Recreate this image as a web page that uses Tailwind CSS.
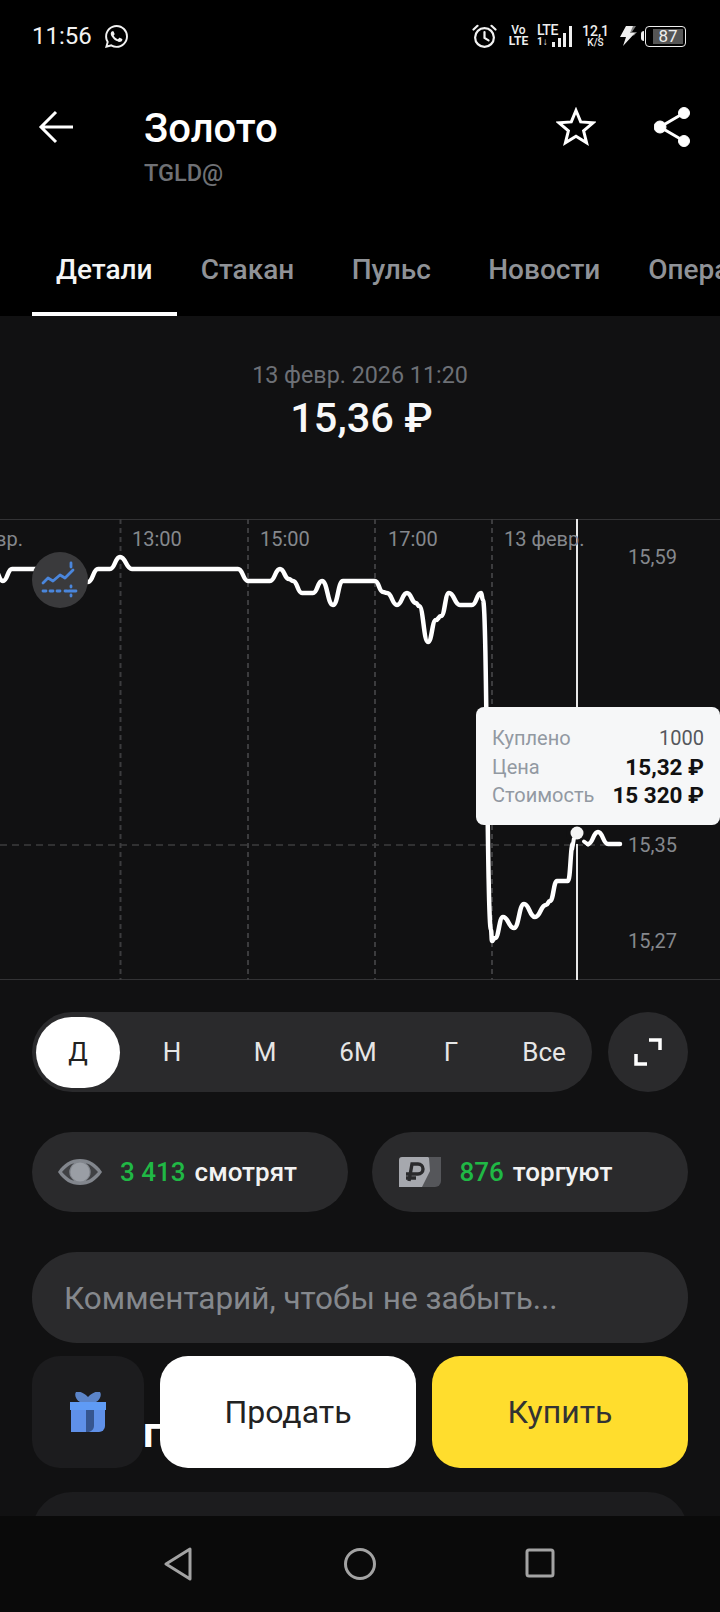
<!DOCTYPE html>
<html lang="ru">
<head>
  <meta charset="UTF-8">
  <title>Золото</title>
  <script src="https://cdn.jsdelivr.net/npm/@tailwindcss/browser@4"></script>
  <meta name="viewport" content="width=device-width, initial-scale=1.0">
</head>
<body class="bg-black">
<div class="relative w-[720px] h-[1612px] overflow-hidden bg-[#111112] text-white font-['Roboto',sans-serif]">

  <!-- Header -->
  <div class="bg-black h-[316px] relative">
    <!-- Status bar -->
    <div class="h-[72px] flex items-center justify-between pl-8 pr-[34px]">
      <div class="flex items-center gap-[13px]">
        <span class="text-[24px] leading-none text-[#f2f2f2]">11:56</span>
        <svg class="w-[23px] h-[23px]" viewBox="0 0 24 24" fill="#f2f2f2"><path d="M17.472 14.382c-.297-.149-1.758-.867-2.03-.967-.273-.099-.471-.148-.67.15-.197.297-.767.966-.94 1.164-.173.199-.347.223-.644.075-.297-.15-1.255-.463-2.39-1.475-.883-.788-1.48-1.761-1.653-2.059-.173-.297-.018-.458.13-.606.134-.133.298-.347.446-.52.149-.174.198-.298.298-.497.099-.198.05-.371-.025-.52-.075-.149-.669-1.612-.916-2.207-.242-.579-.487-.5-.669-.51-.173-.008-.371-.01-.57-.01-.198 0-.52.074-.792.372-.272.297-1.04 1.016-1.04 2.479 0 1.462 1.065 2.875 1.213 3.074.149.198 2.096 3.2 5.077 4.487.709.306 1.262.489 1.694.625.712.227 1.36.195 1.871.118.571-.085 1.758-.719 2.006-1.413.248-.694.248-1.289.173-1.413-.074-.124-.272-.198-.57-.347m-5.421 7.403h-.004a9.87 9.87 0 01-5.031-1.378l-.361-.214-3.741.982.998-3.648-.235-.374a9.86 9.86 0 01-1.51-5.26c.001-5.45 4.436-9.884 9.888-9.884 2.64 0 5.122 1.03 6.988 2.898a9.825 9.825 0 012.893 6.994c-.003 5.45-4.437 9.884-9.885 9.884m8.413-18.297A11.815 11.815 0 0012.05 0C5.495 0 .16 5.335.157 11.892c0 2.096.547 4.142 1.588 5.945L.057 24l6.305-1.654a11.882 11.882 0 005.683 1.448h.005c6.554 0 11.89-5.335 11.893-11.893a11.821 11.821 0 00-3.48-8.413z"/></svg>
      </div>
      <div class="flex items-center text-[#eeeeee]">
        <svg class="w-[25px] h-[25px] mr-[10px]" viewBox="0 0 25 25" fill="none" stroke="#f2f2f2" stroke-width="2.2" stroke-linecap="round"><circle cx="12.5" cy="13.5" r="9.4"/><path d="M12.5 8v6l4 2.4M1.5 5.5 5.5 1.8M23.5 5.5l-4-3.7"/></svg>
        <div class="w-[23px] mr-[7px] flex flex-col items-center font-medium">
          <span class="text-[12px] leading-[11px]">Vo</span>
          <span class="text-[12px] leading-[11px] font-bold">LTE</span>
        </div>
        <div class="w-[22px] mr-[-7px] self-start flex flex-col font-medium">
          <span class="text-[14px] leading-[13px] font-medium tracking-[-0.5px]">LTE</span>
          <span class="text-[10px] leading-[10px] font-bold">1↓</span>
        </div>
        <div class="w-[22px] h-[22px] mr-[7px] flex items-end gap-[2.5px]">
          <span class="w-[3px] h-[5px] bg-[#eeeeee]"></span>
          <span class="w-[3px] h-[9px] bg-[#eeeeee]"></span>
          <span class="w-[3px] h-[14px] bg-[#eeeeee]"></span>
          <span class="w-[3.5px] h-[21px] bg-[#eeeeee]"></span>
        </div>
        <div class="w-[29px] mr-[9px] flex flex-col items-center font-medium">
          <span class="text-[14px] leading-[13px]">12,1</span>
          <span class="text-[10px] leading-[10px]">K/S</span>
        </div>
        <svg class="w-[19px] h-[20px] mr-[3px]" viewBox="0 0 19 20"><path d="M8 0h9l-4 6h5l-3 3.5L12 9z" fill="#7d7d7d"/><path d="M7 0h7l-3 7h5L4 20l3-9H1z" fill="#eeeeee"/></svg>
        <span class="w-[3px] h-[10px] bg-[#eeeeee] rounded-l-sm mr-[1px]"></span>
        <div class="w-[41px] h-[21px] border-[1.5px] border-[#eeeeee] rounded-[4px] pl-[7px] pr-[2px] py-[2px]">
          <div class="h-full bg-[#555555] flex items-center justify-center text-[17px] leading-none">87</div>
        </div>
      </div>
    </div>

    <!-- Title row -->
    <div class="flex pl-[38px] pr-[30px] pt-[34px]">
      <svg class="w-[36px] h-[36px] mt-[3px] mr-[70px]" viewBox="0 0 36 36" fill="none" stroke="#fff" stroke-width="3"><path d="M35 18H5M18 3 3 18l15 15"/></svg>
      <div class="flex-1">
        <div class="text-[40px] leading-[46px] font-medium">Золото</div>
        <div class="text-[23.500px] leading-[28px] mt-[7px] font-medium text-[#6f7175]">TGLD@</div>
      </div>
      <svg class="w-[40px] h-[40px] mt-[1px] mr-[58px]" viewBox="0 0 40 40" fill="none" stroke="#fff" stroke-width="3" stroke-linejoin="miter"><path d="M20 3.5l4.7 11.4 12.3.9-9.4 8 3 12-10.6-6.5-10.6 6.5 3-12-9.4-8 12.3-.9z"/></svg>
      <svg class="w-[36px] h-[40px] mt-[1px]" viewBox="0 0 36 40" fill="#fff" stroke="#fff"><path d="M30 6 6 20l24 14" fill="none" stroke-width="3"/><circle cx="30" cy="6" r="5.5"/><circle cx="6" cy="20" r="6"/><circle cx="30" cy="34" r="5.5"/></svg>
    </div>

    <!-- Tabs -->
    <div class="absolute left-8 bottom-0 h-[84px] flex whitespace-nowrap text-[28px] font-medium text-[#8f9297]">
      <div class="px-6 pt-[17px] text-[#f5f5f5] border-b-[4px] border-white">Детали</div>
      <div class="px-6 pt-[17px]">Стакан</div>
      <div class="w-[146px] text-center pt-[17px]">Пульс</div>
      <div class="px-6 pt-[17px]">Новости</div>
      <div class="px-6 pt-[17px]">Операции</div>
    </div>
  </div>

  <!-- Price -->
  <div class="h-[203px] pt-[44px] text-center">
    <div class="text-[23.300px] leading-[30px] text-[#6d7076]">13 февр. 2026 11:20</div>
    <div class="text-[41.500px] leading-[48px] mt-[4px] pl-[3px] font-medium text-[#f8f8f8]">15,36 ₽</div>
  </div>

  <!-- Chart -->
  <div class="relative h-[461px] border-y border-[#333335]">
    <svg class="absolute left-0 top-[-1px]" width="720" height="461" viewBox="0 519 720 461" fill="none">
      <g stroke="#3c3c3e" stroke-width="2" stroke-dasharray="5 4">
        <path d="M120.500 519V980M248 519V980M375 519V980M492 519V980"/>
        <path d="M0 845H622" stroke-width="1.500" stroke-dasharray="7 5"/>
      </g>
      <path d="M577 519V980" stroke="#e8e8e8" stroke-width="2"/>
      <path id="price-line" stroke="#fff" stroke-width="4.500" stroke-linecap="round" stroke-linejoin="round"/>
      <circle cx="577" cy="833" r="11" fill="#111112"/>
      <circle cx="577" cy="833" r="6.500" fill="#f4f4f4"/>
      <path d="M572 850 574 838" stroke="#fff" stroke-width="4"/>
      <path d="M584 841.500 588 844.500" stroke="#fff" stroke-width="4" stroke-linecap="round"/>
    </svg>

    <span class="absolute left-[-5px] top-[6px] text-[20px] leading-[26px] text-[#85888d]">вр.</span>
    <span class="absolute left-[132px] top-[6px] text-[20px] leading-[26px] text-[#85888d]">13:00</span>
    <span class="absolute left-[260px] top-[6px] text-[20px] leading-[26px] text-[#85888d]">15:00</span>
    <span class="absolute left-[388px] top-[6px] text-[20px] leading-[26px] text-[#85888d]">17:00</span>
    <span class="absolute left-[504px] top-[6px] text-[20px] leading-[26px] text-[#85888d]">13 февр.</span>
    <span class="absolute left-[628px] top-[24px] text-[20px] leading-[26px] text-[#85888d]">15,59</span>
    <span class="absolute left-[628px] top-[312px] text-[20px] leading-[26px] text-[#85888d]">15,35</span>
    <span class="absolute left-[628px] top-[408px] text-[20px] leading-[26px] text-[#85888d]">15,27</span>

    <!-- Indicators button -->
    <div class="absolute left-8 top-[32px] w-[56px] h-[56px] rounded-full bg-[#3a3a3c] flex items-center justify-center">
      <svg class="w-[40px] h-[40px]" viewBox="0 0 40 40" fill="none" stroke="#4a86dc" stroke-width="2.800" stroke-linecap="round" stroke-linejoin="round"><path d="M3 23l5-5 5 3 7-6 5 3 8-8"/><path d="M31 3v4" /><path d="M3 31h3M10 31h3M17 31h3M25 31h2M33 31h3M31 26v1M31 35v1M29 31h4"/></svg>
    </div>

    <!-- Tooltip -->
    <div class="absolute left-[476px] top-[187px] w-[244px] h-[118px] rounded-[8px] bg-[#f6f7f8] px-4 pt-[17px] text-[20px] leading-[28.500px]">
      <div class="flex justify-between text-[#9299a2]"><span>Куплено</span><span class="text-[#55585d]">1000</span></div>
      <div class="flex justify-between text-[#9299a2]"><span>Цена</span><span class="font-bold text-[22.500px] text-[#111]">15,32 ₽</span></div>
      <div class="flex justify-between text-[#9299a2]"><span>Стоимость</span><span class="font-bold text-[22.500px] text-[#111]">15 320 ₽</span></div>
    </div>
  </div>

  <!-- Period selector -->
  <div class="flex gap-4 px-8 mt-[32px]">
    <div class="w-[560px] h-[80px] rounded-full bg-[#2a2a2c] flex items-center pl-1 text-[26px] text-[#e6e6e6]">
      <div class="w-[84px] h-[71px] rounded-full bg-white text-[#222] flex items-center justify-center mr-[10px]">Д</div>
      <div class="w-[84px] text-center mr-[9px]">Н</div>
      <div class="w-[84px] text-center mr-[9px]">М</div>
      <div class="w-[84px] text-center mr-[9px]">6М</div>
      <div class="w-[84px] text-center mr-[9px]">Г</div>
      <div class="w-[84px] text-center">Все</div>
    </div>
    <div class="w-[80px] h-[80px] rounded-full bg-[#2a2a2c] flex items-center justify-center">
      <svg class="w-[30px] h-[30px]" viewBox="0 0 30 30" fill="none" stroke="#fff" stroke-width="3.500"><path d="M3 17v10h11M16 3h11v10"/></svg>
    </div>
  </div>

  <!-- Watchers -->
  <div class="flex gap-6 px-8 mt-[40px]">
    <div class="flex-1 h-[80px] rounded-full bg-[#2a2a2c] flex items-center pl-[26px] text-[26px] font-medium">
      <svg class="w-[44px] h-[26px] mr-[18px]" viewBox="0 0 44 26"><path d="M0 13C6 4 13 0 22 0s16 4 22 13c-6 9-13 13-22 13S6 22 0 13z" fill="#82868d"/><path d="M4 13C9 7 14 4.500 16 4.500a10 10 0 0 0 0 17C14 21.500 9 19 4 13zM40 13c-5-6-10-8.500-12-8.500a10 10 0 0 1 0 17c2 0 7-2.500 12-8.500z" fill="#2a2a2c" opacity=".75"/><circle cx="22" cy="13" r="9.500" fill="#9a9ea5"/></svg>
      <span class="text-[#20b845] mr-[9px]">3 413</span><span class="text-[#f2f2f2]">смотрят</span>
    </div>
    <div class="flex-1 h-[80px] rounded-full bg-[#2a2a2c] flex items-center pl-[27px] text-[26px] font-medium">
      <svg class="w-[42px] h-[30px] mr-[19px]" viewBox="0 0 42 30"><path d="M12 0h30v24a6 6 0 0 1-6 6H12z" fill="#55565a"/><path d="M3 0h26l1 1 1 0 0 0-1 0L31 14 23 30H0V3a3 3 0 0 1 3-3z" fill="#a6a8ae"/><path d="M10 24 13 7h6a4.500 4.500 0 0 1 0 10H7M7 21h10" fill="none" stroke="#2a2a2c" stroke-width="3.400"/></svg>
      <span class="text-[#20b845] mr-[9px]">876</span><span class="text-[#f2f2f2]">торгуют</span>
    </div>
  </div>

  <!-- Comment -->
  <div class="mx-8 mt-[40px] h-[91px] rounded-[45px] bg-[#2a2a2c] flex items-center pl-8 pt-[2px] text-[31.500px] text-[#85888d]">Комментарий, чтобы не забыть...</div>

  <!-- Content scrolled under the buttons -->
  <div class="pl-[143px] mt-[65px] text-[42px] leading-[50px] font-bold">го</div>
  <div class="mx-8 mt-[34px] h-[120px] rounded-[40px] bg-[#1c1c1e]"></div>

  <!-- Bottom action buttons -->
  <div class="absolute left-8 top-[1356px] flex gap-4">
    <div class="w-[112px] h-[112px] rounded-[28px] bg-[#1c1c1e] flex items-center justify-center">
      <svg class="w-[40px] h-[40px]" viewBox="0 0 40 40"><path d="M8 0c3-1 7 0 12 5 5-5 9-6 12-5 2 3 0 8-4 10H12C8 8 6 3 8 0z" fill="#5b84c8"/><path d="M2 10h36v8H2z" fill="#5f9bf5"/><path d="M3 18h34v16a6 6 0 0 1-6 6H3z" fill="#5f90e8"/><path d="M18 18h8v16c0 3-2 5-5 6h-3z" fill="#36558f"/></svg>
    </div>
    <div class="w-[256px] h-[112px] rounded-[28px] bg-white text-[#222] flex items-center justify-center text-[32px]">Продать</div>
    <div class="w-[256px] h-[112px] rounded-[28px] bg-[#ffdd2d] text-[#333] flex items-center justify-center text-[32px]">Купить</div>
  </div>

  <!-- Nav bar -->
  <div class="absolute left-0 bottom-0 w-full h-[96px] bg-[#0a0a0a] flex items-center">
    <svg class="absolute left-[163px] top-[31px] w-[30px] h-[34px]" viewBox="0 0 30 34" fill="none" stroke="#a3a3a3" stroke-width="3" stroke-linejoin="round"><path d="M3 17 27 2v30z"/></svg>
    <svg class="absolute left-[343px] top-[31px] w-[34px] h-[34px]" viewBox="0 0 34 34" fill="none" stroke="#a3a3a3" stroke-width="3"><circle cx="17" cy="17" r="14.500"/></svg>
    <svg class="absolute left-[524px] top-[31px] w-[32px] h-[32px]" viewBox="0 0 32 32" fill="none" stroke="#a3a3a3" stroke-width="3"><rect x="3" y="3" width="26" height="26" rx="2"/></svg>
  </div>
</div>

<script>
  // chart points in page coordinates, read off the screen
  const pts = [[-6,569],[3,581],[12,569],[33,569],[60,569],[88,582],[98,569],[110,569],[120,557],[132,569],[238,569],[248,581],[270,581],[280,569],[289,579],[293,581],[302,593],[313,593],[322,581],[333,605],[343,581],[375,581],[383,592],[387,593],[397,605],[407,593],[416,603],[419,606],[428,642],[436,620],[441,616],[449,593],[460,605],[472,605],[481,593],[483,600],[491,930],[492,941],[495,938],[503,917],[514,928],[524,904],[535,917],[546,905],[550,901],[557,881],[568,881],[573,843]];
  const post = [[588,844],[598,832],[608,844],[620,844]];
  function curve(list) {
    let d = `M${list[0][0]} ${list[0][1]}`;
    for (let i = 1; i < list.length; i++) {
      const [x0, y0] = list[i - 1];
      const [x1, y1] = list[i];
      const mx = (x0 + x1) / 2;
      d += `C${mx} ${y0} ${mx} ${y1} ${x1} ${y1}`;
    }
    return d;
  }
  document.getElementById('price-line').setAttribute('d', curve(pts) + curve(post));
</script>
</body>
</html>
